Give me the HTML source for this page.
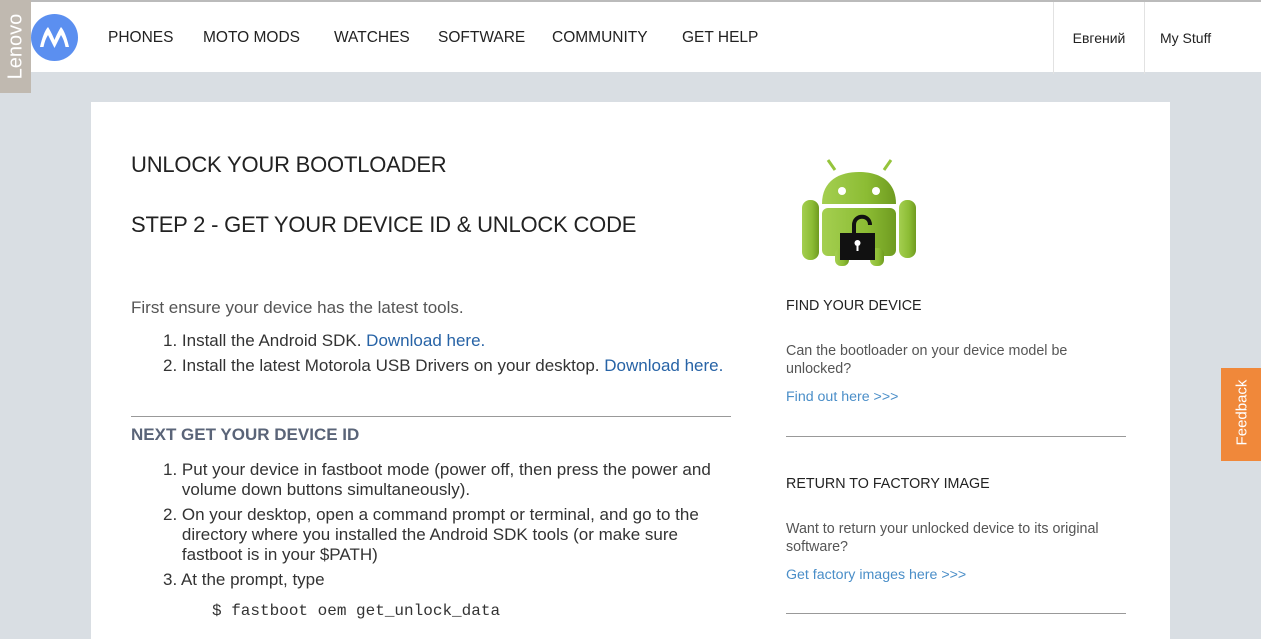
<!DOCTYPE html>
<html><head><meta charset="utf-8"><style>
*{margin:0;padding:0;box-sizing:border-box}
body{width:1261px;height:639px;overflow:hidden;background:#d9dee3;font-family:"Liberation Sans","DejaVu Sans",sans-serif;position:relative;color:#333}
.hdr{position:absolute;left:0;top:0;width:1261px;height:72px;background:#fff;border-top:2px solid #bbb}
.lenovo{position:absolute;left:0;top:0;width:31px;height:93px;background:#c0b9b0}
.lenovo span{position:absolute;left:-20px;top:35px;transform:rotate(-90deg);color:#fff;font-size:20px;width:72px;text-align:center}
.logo{position:absolute;left:31px;top:12px;width:47px;height:47px;border-radius:50%;background:#5b8ff0}
.nav{position:absolute;top:27px;font-size:15.5px;color:#222}
.rt{position:absolute;top:0;height:72px;border-left:1px solid #e2e2e2;font-size:14px;color:#222;padding-top:28px}
.card{position:absolute;left:91px;top:102px;width:1079px;height:537px;background:#fff}
.a{position:absolute;white-space:nowrap}
h1{font-weight:normal;font-size:22px;color:#222;letter-spacing:-0.2px}
.b{color:#2763a6}
.t{font-size:17px;color:#333}
.s{font-size:14.3px;color:#555}
.l{color:#4a8ec8;font-size:14.2px}
.hr{position:absolute;height:1px;background:#999}
.fb{position:absolute;left:1221px;top:368px;width:40px;height:93px;background:#f0883a}
.fb span{position:absolute;left:-19px;top:36px;transform:rotate(-90deg);color:#fff;font-size:15px;width:80px;text-align:center}
</style></head><body>
<div class="hdr">
<div class="logo"><svg width="47" height="47" viewBox="0 0 47 47"><path d="M9 33 C11 24 14 16 17 13 C19 16 22 22 23.5 26 C25 22 28 16 30 13 C33 16 36 24 38 33 L34.5 33 C33.5 28 32 24 30 21 C28 25 25.5 30 23.5 34 C21.5 30 19 25 17 21 C15 24 13.5 28 12.5 33Z" fill="#fff"/></svg></div>
<div class="nav" style="left:108px">PHONES</div>
<div class="nav" style="left:203px">MOTO MODS</div>
<div class="nav" style="left:334px">WATCHES</div>
<div class="nav" style="left:438px">SOFTWARE</div>
<div class="nav" style="left:552px">COMMUNITY</div>
<div class="nav" style="left:682px">GET HELP</div>
<div class="rt" style="left:1053px;width:91px;text-align:center">Евгений</div>
<div class="rt" style="left:1144px;width:117px;padding-left:15px">My Stuff</div>
</div>
<div class="lenovo"><span>Lenovo</span></div>
<div class="card"></div>
<h1 class="a" style="left:131px;top:152px">UNLOCK YOUR BOOTLOADER</h1>
<h1 class="a" style="left:131px;top:212px">STEP 2 - GET YOUR DEVICE ID &amp; UNLOCK CODE</h1>
<div class="a t" style="left:131px;top:298px;color:#555">First ensure your device has the latest tools.</div>
<div class="a t" style="left:163px;top:331px">1. Install the Android SDK. <span class="b">Download here.</span></div>
<div class="a t" style="left:163px;top:356px">2. Install the latest Motorola USB Drivers on your desktop. <span class="b">Download here.</span></div>
<div class="hr" style="left:131px;top:416px;width:600px"></div>
<div class="a" style="left:131px;top:425px;font-size:17px;font-weight:bold;color:#5a6478">NEXT GET YOUR DEVICE ID</div>
<div class="a t" style="left:163px;top:460px;line-height:20px">1. Put your device in fastboot mode (power off, then press the power and<br>&nbsp;&nbsp;&nbsp;&nbsp;volume down buttons simultaneously).</div>
<div class="a t" style="left:163px;top:505px;line-height:20px">2. On your desktop, open a command prompt or terminal, and go to the<br>&nbsp;&nbsp;&nbsp;&nbsp;directory where you installed the Android SDK tools (or make sure<br>&nbsp;&nbsp;&nbsp;&nbsp;fastboot is in your $PATH)</div>
<div class="a t" style="left:163px;top:570px">3. At the prompt, type</div>
<div class="a" style="left:212px;top:602px;font-family:'Liberation Mono',monospace;font-size:16px;color:#333">$ fastboot oem get_unlock_data</div>
<svg class="a" style="left:800px;top:158px" width="118" height="108" viewBox="0 0 118 108">
<defs><linearGradient id="g" x1="0" x2="1"><stop offset="0" stop-color="#a4cf50"/><stop offset=".6" stop-color="#8cbc34"/><stop offset="1" stop-color="#6f9b20"/></linearGradient></defs>
<path d="M35 12 L28 2 M84 12 L91 2" stroke="#95c43c" stroke-width="3"/>
<path d="M22 46 C22 22 40 14 59 14 C78 14 96 22 96 46Z" fill="url(#g)"/>
<circle cx="42" cy="33" r="4" fill="#fff"/><circle cx="76" cy="33" r="4" fill="#fff"/>
<rect x="22" y="50" width="74" height="48" rx="6" fill="url(#g)"/>
<rect x="2" y="42" width="17" height="60" rx="8" fill="url(#g)"/>
<rect x="99" y="42" width="17" height="58" rx="8" fill="url(#g)"/>
<rect x="35" y="90" width="14" height="18" rx="6" fill="url(#g)"/>
<rect x="70" y="90" width="14" height="18" rx="6" fill="url(#g)"/>
<path d="M54 76 V67 C54 56 70 56 70 67" stroke="#111" stroke-width="4" fill="none"/>
<rect x="40" y="75" width="35" height="27" fill="#111"/>
<circle cx="57.5" cy="85" r="3" fill="#fff"/><rect x="56.5" y="86" width="2" height="7" fill="#fff"/>
</svg>
<div class="a" style="left:786px;top:298px;font-size:14.3px;color:#222">FIND YOUR DEVICE</div>
<div class="a s" style="left:786px;top:342px;line-height:18px">Can the bootloader on your device model be<br>unlocked?</div>
<div class="a l" style="left:786px;top:389px">Find out here &gt;&gt;&gt;</div>
<div class="hr" style="left:786px;top:436px;width:340px"></div>
<div class="a" style="left:786px;top:476px;font-size:14.3px;color:#222">RETURN TO FACTORY IMAGE</div>
<div class="a s" style="left:786px;top:520px;line-height:18px">Want to return your unlocked device to its original<br>software?</div>
<div class="a l" style="left:786px;top:567px">Get factory images here &gt;&gt;&gt;</div>
<div class="hr" style="left:786px;top:613px;width:340px"></div>
<div class="fb"><span>Feedback</span></div>
</body></html>
